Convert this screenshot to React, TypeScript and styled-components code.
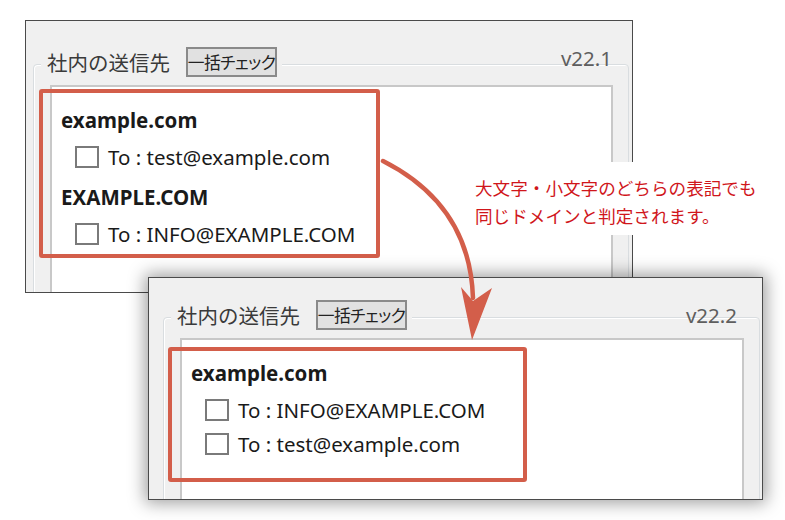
import styled, { createGlobalStyle } from "styled-components";

// --- GLOBAL ---

const GlobalStyle = createGlobalStyle`
    html, body {
        margin: 0;
        padding: 0;
        background: #ffffff;
    }
    body {
        font-family: "Noto Sans", "Noto Sans CJK JP", sans-serif;
        color: #1a1a1a;
    }
`;

const ACCENT = "#d35e4a";

// --- STYLED COMPONENTS ---

const Canvas = styled.div`
    position: relative;
    width: 785px;
    height: 520px;
    overflow: hidden;
    background: #ffffff;
`;

// windows sit on a free canvas, so they are placed by coordinates
const Window = styled.div<{ $x: number; $y: number; $w: number; $h: number; $z: number; $shadow?: boolean }>`
    position: absolute;
    left: ${(p) => p.$x}px;
    top: ${(p) => p.$y}px;
    width: ${(p) => p.$w}px;
    height: ${(p) => p.$h}px;
    z-index: ${(p) => p.$z};
    box-sizing: border-box;
    border: 1px solid #4a4a4a;
    background: #f0f0f0;
    overflow: hidden;
    box-shadow: ${(p) => (p.$shadow ? "0 0 16px 3px rgba(0, 0, 0, 0.38)" : "none")};
`;

const GroupBox = styled.div<{ $top: number; $left: number; $right: number }>`
    margin: ${(p) => `${p.$top}px ${p.$right}px 0 ${p.$left}px`};
    border: 1px solid #d9dde0;
    border-radius: 4px;
    box-shadow: inset 1px 1px 0 #ffffff;
    height: 400px;
`;

const GroupHead = styled.div`
    display: flex;
    align-items: center;
    height: 31px;
    margin-top: -19px;
`;

const Legend = styled.div`
    display: flex;
    align-items: center;
    gap: 16px;
    margin-left: 7px;
    padding: 0 5px 0 6px;
    background: #f0f0f0;
`;

const Title = styled.span`
    font-family: "Noto Sans CJK JP", sans-serif;
    font-size: 20.5px;
    line-height: 24px;
    color: #3a3a3a;
`;

const CheckAllButton = styled.button`
    display: flex;
    align-items: center;
    justify-content: center;
    box-sizing: border-box;
    width: 91px;
    height: 30px;
    padding: 0;
    border: 2px solid #8a8a8a;
    background: #e1e1e1;
    font-family: "Noto Sans CJK JP", sans-serif;
    font-feature-settings: "palt";
    font-size: 16.8px;
    letter-spacing: -0.6px;
    white-space: nowrap;
    color: #222222;
`;

const Version = styled.span<{ $offset: number; $right: number }>`
    align-self: flex-start;
    margin: ${(p) => `${p.$offset}px ${p.$right}px 0 auto`};
    font-size: 20.5px;
    line-height: 24px;
    color: #5e5e5e;
`;

const ListBox = styled.div<{ $top: number }>`
    margin: ${(p) => p.$top}px 15px 0 16px;
    height: 400px;
    padding: 13px 0 0 9px;
    border: 2px solid #c8c8c8;
    background: #ffffff;
`;

const DomainGroup = styled.div`
    & + & {
        margin-top: 3px;
    }
`;

const DomainRow = styled.div`
    height: 40px;
    display: flex;
    align-items: center;
    font-size: 20.5px;
    font-weight: 700;
    color: #1a1a1a;
`;

const ItemRow = styled.label`
    height: 34px;
    display: flex;
    align-items: center;
    gap: 9px;
    padding-left: 14px;
    font-size: 20.5px;
    color: #1a1a1a;
`;

const Box = styled.input`
    appearance: none;
    margin: 0;
    box-sizing: border-box;
    width: 24px;
    height: 22px;
    border: 2px solid #7a7a7a;
    background: #ffffff;
`;

// the red annotation frames lie over the window content
const Highlight = styled.div<{ $x: number; $y: number; $w: number; $h: number }>`
    position: absolute;
    left: ${(p) => p.$x}px;
    top: ${(p) => p.$y}px;
    width: ${(p) => p.$w}px;
    height: ${(p) => p.$h}px;
    box-sizing: border-box;
    border: 4px solid ${ACCENT};
    border-radius: 3px;
    pointer-events: none;
`;

const Note = styled.div`
    position: absolute;
    left: 465px;
    top: 162px;
    width: 305px;
    height: 73px;
    z-index: 2;
    box-sizing: border-box;
    padding: 12px 0 0 10px;
    background: #ffffff;
    font-family: "Noto Sans CJK JP", sans-serif;
    font-size: 17.6px;
    line-height: 28px;
    color: #d0161b;
    white-space: nowrap;
`;

const ArrowLayer = styled.svg`
    position: absolute;
    left: 0;
    top: 0;
    z-index: 5;
    pointer-events: none;
`;

// --- DATA ---

type Group = { domain: string; items: string[] };

type Shot = {
    version: string;
    frame: { x: number; y: number; w: number; h: number; z: number; shadow?: boolean };
    group: { top: number; left: number; right: number };
    versionOffset: number;
    versionRight: number;
    listTop: number;
    mark: { x: number; y: number; w: number; h: number };
    groups: Group[];
};

const shots: Shot[] = [
    {
        version: "v22.1",
        frame: { x: 25, y: 20, w: 608, h: 273, z: 1 },
        group: { top: 43, left: 7, right: 3 },
        versionOffset: 0,
        versionRight: 16,
        listTop: 8,
        mark: { x: 13, y: 68, w: 341, h: 169 },
        groups: [
            { domain: "example.com", items: ["test@example.com"] },
            { domain: "EXAMPLE.COM", items: ["INFO@EXAMPLE.COM"] },
        ],
    },
    {
        version: "v22.2",
        frame: { x: 148, y: 277, w: 615, h: 223, z: 3, shadow: true },
        group: { top: 39, left: 14, right: 2 },
        versionOffset: 4,
        versionRight: 22,
        listTop: 8,
        mark: { x: 19, y: 69, w: 359, h: 135 },
        groups: [
            { domain: "example.com", items: ["INFO@EXAMPLE.COM", "test@example.com"] },
        ],
    },
];

// --- PAGE COMPONENT ---

function DialogShot({ shot }: { shot: Shot }) {
    const f = shot.frame;
    return (
        <Window $x={f.x} $y={f.y} $w={f.w} $h={f.h} $z={f.z} $shadow={f.shadow}>
            <GroupBox $top={shot.group.top} $left={shot.group.left} $right={shot.group.right}>
                <GroupHead>
                    <Legend>
                        <Title>社内の送信先</Title>
                        <CheckAllButton type="button">一括チェック</CheckAllButton>
                    </Legend>
                    <Version $offset={shot.versionOffset} $right={shot.versionRight}>
                        {shot.version}
                    </Version>
                </GroupHead>
                <ListBox $top={shot.listTop}>
                    {shot.groups.map((g) => (
                        <DomainGroup key={g.domain}>
                            <DomainRow>{g.domain}</DomainRow>
                            {g.items.map((addr) => (
                                <ItemRow key={addr}>
                                    <Box type="checkbox" readOnly />
                                    To : {addr}
                                </ItemRow>
                            ))}
                        </DomainGroup>
                    ))}
                </ListBox>
            </GroupBox>
            <Highlight $x={shot.mark.x} $y={shot.mark.y} $w={shot.mark.w} $h={shot.mark.h} />
        </Window>
    );
}

export default function App() {
    return (
        <>
            <GlobalStyle />
            <Canvas>
                {shots.map((s) => (
                    <DialogShot key={s.version} shot={s} />
                ))}

                <Note>
                    大文字・小文字のどちらの表記でも
                    <br />
                    同じドメインと判定されます。
                </Note>

                {/* curved arrow from the old list to the new one */}
                <ArrowLayer width="785" height="520" viewBox="0 0 785 520">
                    <path
                        d="M383 161 Q470 205 473 298"
                        fill="none"
                        stroke={ACCENT}
                        strokeWidth="4.5"
                        strokeLinecap="round"
                    />
                    <polygon points="461,287 473,301 492,288 472,340" fill={ACCENT} />
                </ArrowLayer>
            </Canvas>
        </>
    );
}
